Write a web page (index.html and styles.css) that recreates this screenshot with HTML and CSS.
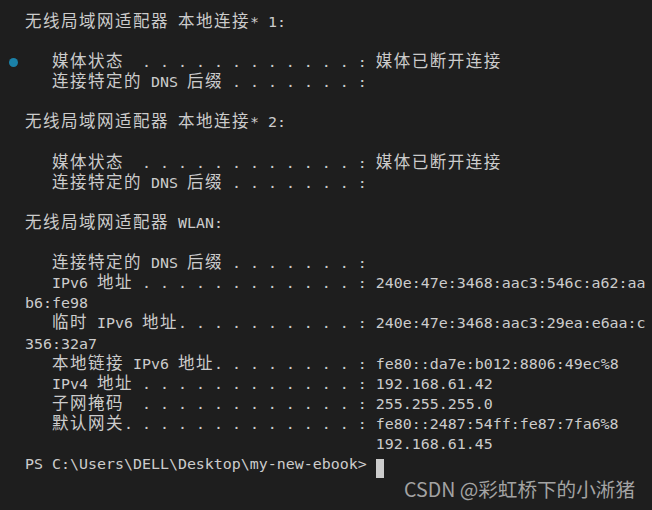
FILE: index.html
```html
<!DOCTYPE html>
<html lang="zh-CN">
<head>
<meta charset="utf-8">
<title>Terminal</title>
<link rel="stylesheet" href="styles.css">
</head>
<body>
<div class="term">
<span class="mark"></span>
<pre class="out"><span class="c">无线局域网适配器</span> <span class="c">本地连接</span>* 1:

   <span class="c">媒体状态</span>  . . . . . . . . . . . . : <span class="c">媒体已断开连接</span>
   <span class="c">连接特定的</span> DNS <span class="c">后缀</span> . . . . . . . :

<span class="c">无线局域网适配器</span> <span class="c">本地连接</span>* 2:

   <span class="c">媒体状态</span>  . . . . . . . . . . . . : <span class="c">媒体已断开连接</span>
   <span class="c">连接特定的</span> DNS <span class="c">后缀</span> . . . . . . . :

<span class="c">无线局域网适配器</span> WLAN:

   <span class="c">连接特定的</span> DNS <span class="c">后缀</span> . . . . . . . :
   IPv6 <span class="c">地址</span> . . . . . . . . . . . . : 240e:47e:3468:aac3:546c:a62:aa
b6:fe98
   <span class="c">临时</span> IPv6 <span class="c">地址</span>. . . . . . . . . . : 240e:47e:3468:aac3:29ea:e6aa:c
356:32a7
   <span class="c">本地链接</span> IPv6 <span class="c">地址</span>. . . . . . . . : fe80::da7e:b012:8806:49ec%8
   IPv4 <span class="c">地址</span> . . . . . . . . . . . . : 192.168.61.42
   <span class="c">子网掩码</span>  . . . . . . . . . . . . : 255.255.255.0
   <span class="c">默认网关</span>. . . . . . . . . . . . . : fe80::2487:54ff:fe87:7fa6%8
                                       192.168.61.45
PS C:\Users\DELL\Desktop\my-new-ebook> <span class="cursor"> </span></pre>
<div class="wm">CSDN @彩虹桥下的小淅猪</div>
</div>
</body>
</html>
```

FILE: styles.css
```css
html, body {
  margin: 0;
  padding: 0;
  background: #1e1e1e;
}
.term {
  position: relative;
  width: 652px;
  height: 510px;
  overflow: hidden;
  background: #1e1e1e;
}
.out {
  margin: 0;
  padding: 12px 0 0 25px;
  font-family: "DejaVu Sans Mono", "Liberation Mono", monospace;
  font-size: 14.95px;
  line-height: 20.1px;
  color: #cccccc;
  white-space: pre;
}
.c {
  font-family: "Noto Sans CJK SC", sans-serif;
  font-size: 16.5px;
  letter-spacing: 1.5px;
  line-height: 10px;
}
.cursor {
  display: inline-block;
  width: 8px;
  height: 19px;
  background: #cccccc;
  vertical-align: -5px;
}
.mark {
  position: absolute;
  left: 9px;
  top: 58px;
  width: 9px;
  height: 9px;
  border-radius: 50%;
  background: #1b81a8;
}
.wm {
  position: absolute;
  left: 404px;
  top: 477px;
  font-family: "Noto Sans CJK SC", sans-serif;
  font-size: 19.6px;
  line-height: 24px;
  color: #a3a3a3;
  white-space: nowrap;
}
```
